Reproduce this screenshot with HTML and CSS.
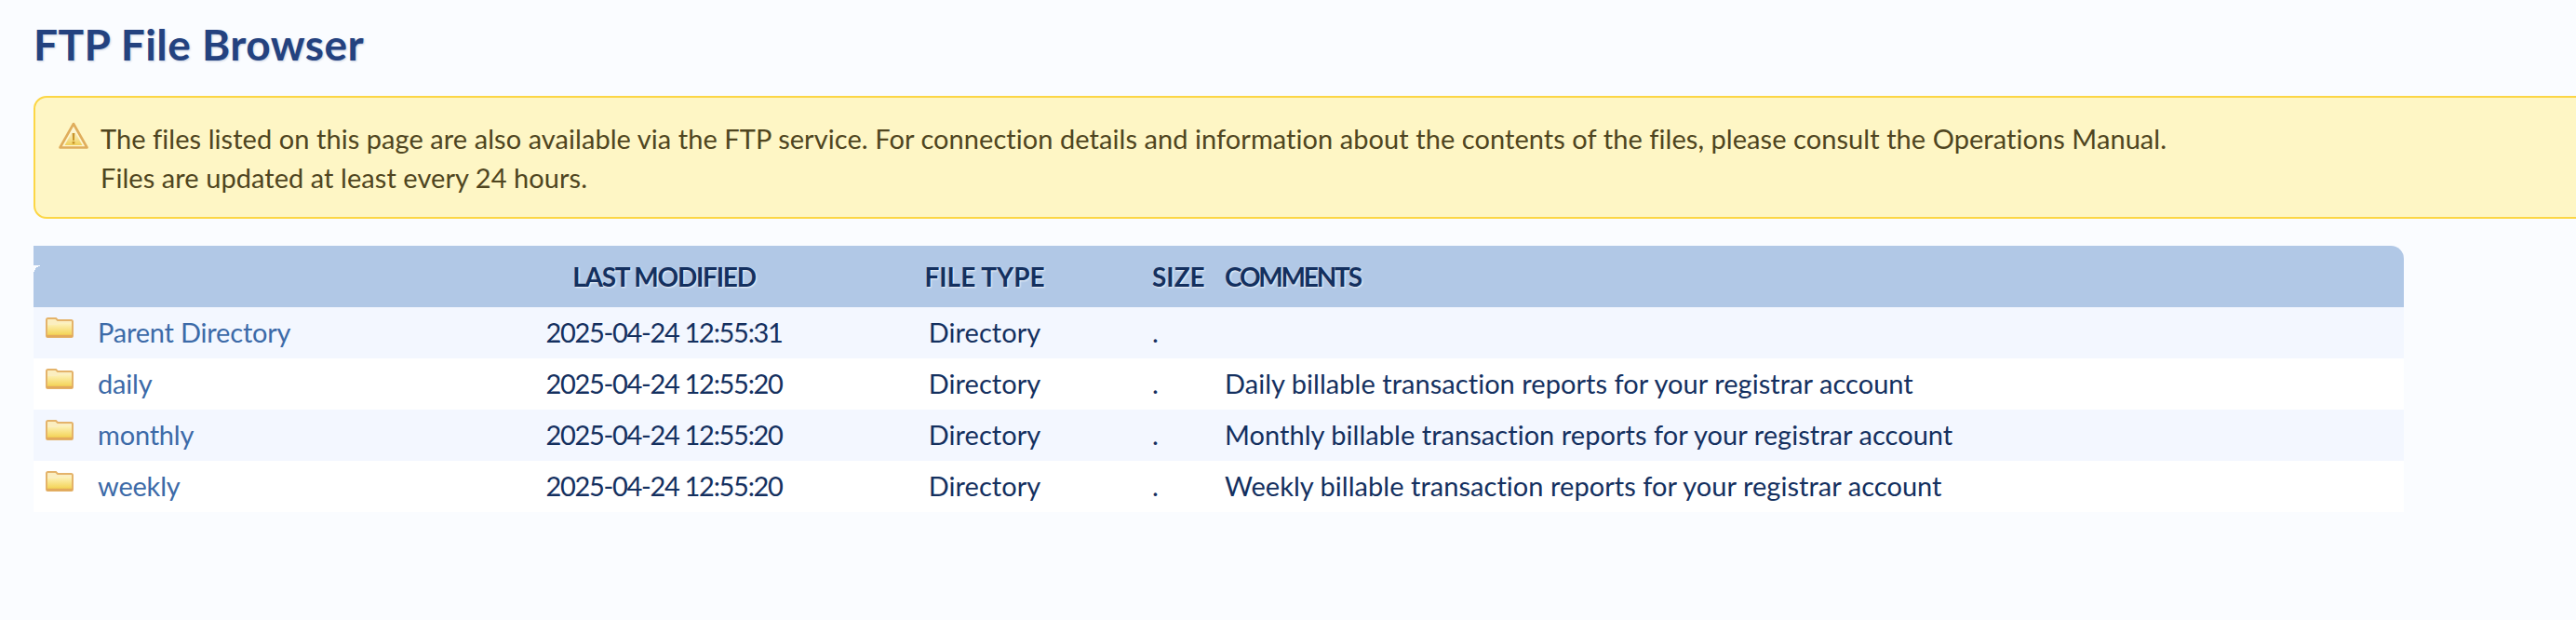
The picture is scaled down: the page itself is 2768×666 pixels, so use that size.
FILE: index.html
```html
<!DOCTYPE html>
<html lang="en">
<head>
<meta charset="utf-8">
<title>FTP File Browser</title>
<link rel="stylesheet" href="styles.css">
</head>
<body>
<main class="page">
  <h1 class="title">FTP File Browser</h1>
  <section class="alert">
    <svg class="alert-icon" viewBox="0 0 32 29" aria-hidden="true">
      <defs>
        <linearGradient id="warnFill" x1="0" y1="0" x2="0" y2="1">
          <stop offset="0" stop-color="#fffbe6"/>
          <stop offset="1" stop-color="#f0cf58"/>
        </linearGradient>
      </defs>
      <path d="M16 2 L30.500 27.500 H1.500 Z" fill="#fdf6d0" stroke="#e0ad5c" stroke-width="2.600" stroke-linejoin="round"/>
      <path d="M16 8 L25.500 25 H6.500 Z" fill="url(#warnFill)"/>
      <path d="M14.600 12 H17.400 L16.900 20 H15.100 Z" fill="#c8952c"/>
      <rect x="14.700" y="21" width="2.600" height="2.600" fill="#c8952c"/>
    </svg>
    <p class="alert-text">The files listed on this page are also available via the FTP service. For connection details and information about the contents of the files, please consult the Operations Manual.<br>Files are updated at least every 24 hours.</p>
  </section>
  <table class="files">
    <colgroup>
      <col class="col-name"><col class="col-date"><col class="col-type"><col class="col-size"><col class="col-comments">
    </colgroup>
    <thead>
      <tr>
        <th class="head-name"></th>
        <th class="center head-date">LAST MODIFIED</th>
        <th class="center">FILE TYPE</th>
        <th class="size">SIZE</th>
        <th class="head-comments">COMMENTS</th>
      </tr>
    </thead>
    <tbody>
      <tr>
        <td class="name"><svg class="folder" viewBox="0 0 30 22" aria-hidden="true"><use href="#folder"/></svg><a href="#">Parent Directory</a></td>
        <td class="center date">2025-04-24 12:55:31</td><td class="center">Directory</td><td class="size">.</td><td></td>
      </tr>
      <tr>
        <td class="name"><svg class="folder" viewBox="0 0 30 22" aria-hidden="true"><use href="#folder"/></svg><a href="#">daily</a></td>
        <td class="center date">2025-04-24 12:55:20</td><td class="center">Directory</td><td class="size">.</td><td>Daily billable transaction reports for your registrar account</td>
      </tr>
      <tr>
        <td class="name"><svg class="folder" viewBox="0 0 30 22" aria-hidden="true"><use href="#folder"/></svg><a href="#">monthly</a></td>
        <td class="center date">2025-04-24 12:55:20</td><td class="center">Directory</td><td class="size">.</td><td>Monthly billable transaction reports for your registrar account</td>
      </tr>
      <tr>
        <td class="name"><svg class="folder" viewBox="0 0 30 22" aria-hidden="true"><use href="#folder"/></svg><a href="#">weekly</a></td>
        <td class="center date">2025-04-24 12:55:20</td><td class="center">Directory</td><td class="size">.</td><td>Weekly billable transaction reports for your registrar account</td>
      </tr>
    </tbody>
  </table>
</main>
<svg class="defs" aria-hidden="true">
  <defs>
    <linearGradient id="folderFill" x1="0" y1="0" x2="0" y2="1">
      <stop offset="0" stop-color="#fdf3c0"/>
      <stop offset="0.45" stop-color="#f9e48a"/>
      <stop offset="1" stop-color="#f2d04c"/>
    </linearGradient>
    <symbol id="folder" viewBox="0 0 30 22">
      <path d="M1 2.500 Q1 1 2.500 1 H11 L13 3 H27.500 Q29 3 29 4.500 V19.500 Q29 21 27.500 21 H2.500 Q1 21 1 19.500 Z" fill="#fbeec0" stroke="#e4b36a" stroke-width="2"/>
      <path d="M2 8 H12 L14 6 H28 V20 H2 Z" fill="url(#folderFill)"/>
      <path d="M1 20 H29" stroke="#e2a95c" stroke-width="2.400"/>
    </symbol>
  </defs>
</svg>
</body>
</html>
```
FILE: styles.css
```css
html {
  overflow-x: hidden;
}

body {
  margin: 0;
  background: #fafcff;
  color: #14305f;
  font-family: "Lato", "Open Sans", sans-serif;
  font-size: 29px;
  line-height: 42px;
}

.page {
  padding: 24px 0 0 36px;
}

.title {
  margin: 0 0 31px;
  font-size: 46px;
  line-height: 48px;
  font-weight: 700;
  letter-spacing: 0.45px;
  color: #24427f;
  text-shadow: 1px 1px 2px rgba(36, 66, 127, 0.25);
}

.alert {
  display: flex;
  align-items: flex-start;
  gap: 13px;
  width: 2800px;
  box-sizing: border-box;
  height: 132px;
  padding: 23px 25px;
  border: 2px solid #fcd645;
  border-radius: 14px;
  background: #fef6c5;
  color: #4f4520;
}

.alert-icon {
  flex: none;
  width: 32px;
  height: 29px;
  margin-top: 3px;
}

.alert-text {
  margin: 0;
  letter-spacing: 0.06px;
}

.files {
  width: 2547px;
  margin-top: 29px;
  table-layout: fixed;
  border-collapse: separate;
  border-spacing: 0;
}

.col-name { width: 505px; }
.col-date { width: 345px; }
.col-type { width: 344px; }
.col-size { width: 74px; }

.files th {
  height: 66px;
  padding: 0 0 0 12px;
  background: #b1c8e6;
  font-size: 28px;
  font-weight: 700;
  text-align: left;
  text-shadow: 1px 1px 2px rgba(255, 255, 255, 0.8);
}

.files th.center,
.files td.center {
  padding-left: 0;
  text-align: center;
}

.files th.size,
.files td.size {
  padding-left: 8px;
}

.files th.head-date {
  letter-spacing: -1.2px;
}

.files th.head-name {
  position: relative;
}

.files th.head-name::before {
  content: "";
  position: absolute;
  left: 0;
  top: 21px;
  width: 10px;
  height: 10px;
  background: radial-gradient(circle at 10px 10px, transparent 10px, #fafcff 10px);
}

.files th.head-comments {
  border-top-right-radius: 14px;
  letter-spacing: -2.2px;
}

.files td {
  height: 55px;
  padding: 0 0 1px 12px;
  box-sizing: border-box;
  background: #fff;
  letter-spacing: 0.04px;
}

.files tbody tr:nth-child(odd) td {
  background: #f3f7ff;
}

.files td.name {
  padding-left: 13px;
}

.files td.date {
  letter-spacing: -1.3px;
}

.folder {
  width: 30px;
  height: 22px;
  margin-right: 26px;
  vertical-align: 5px;
}

.files a {
  color: #3c6aa8;
  letter-spacing: -0.2px;
  text-decoration: none;
}

.defs {
  position: absolute;
  width: 0;
  height: 0;
}
```
